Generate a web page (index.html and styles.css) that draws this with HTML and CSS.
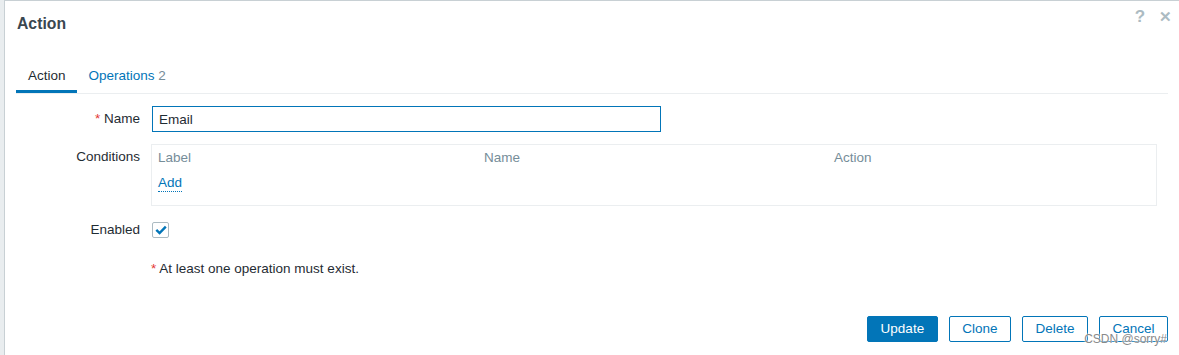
FILE: index.html
```html
<!DOCTYPE html>
<html>
<head>
<meta charset="utf-8">
<link rel="stylesheet" href="styles.css">
</head>
<body>
<div class="page">
  <div class="dialog">
    <div class="head">
      <h4 class="title">Action</h4>
      <div class="head-tools">
        <span class="tool">?</span>
        <span class="tool close">&#x2715;</span>
      </div>
    </div>
    <ul class="tabs">
      <li class="tab active">Action</li>
      <li class="tab">Operations <span class="count">2</span></li>
    </ul>
    <div class="form">
      <div class="row row-name">
        <label class="lbl"><span class="req">*</span> Name</label>
        <div class="field"><input class="text" type="text" value="Email"></div>
      </div>
      <div class="row row-cond">
        <label class="lbl lbl-top">Conditions</label>
        <div class="field">
          <div class="cond-box">
            <div class="cond-head">
              <span>Label</span><span>Name</span><span>Action</span>
            </div>
            <div class="cond-add"><a class="link">Add</a></div>
          </div>
        </div>
      </div>
      <div class="row row-enabled">
        <label class="lbl">Enabled</label>
        <div class="field">
          <span class="checkbox">
            <svg width="12" height="10" viewBox="0 0 12 10"><path d="M1.3 4.8 L4.6 8 L10.8 1.6" fill="none" stroke="#0275b8" stroke-width="2.4"/></svg>
          </span>
        </div>
      </div>
      <div class="row row-warn">
        <div class="lbl"></div>
        <div class="field warn"><span class="req">*</span> At least one operation must exist.</div>
      </div>
    </div>
    <div class="foot">
      <button class="btn primary">Update</button>
      <button class="btn">Clone</button>
      <button class="btn">Delete</button>
      <button class="btn">Cancel</button>
    </div>
    <div class="watermark">CSDN @sorry#</div>
  </div>
</div>
</body>
</html>
```
FILE: styles.css
```css
* { box-sizing: border-box; }
html, body { margin: 0; padding: 0; }
body {
  font-family: "Liberation Sans", Arial, sans-serif;
  font-size: 13.5px;
  color: #1f2c33;
  background: #e9edef;
  width: 1179px;
  height: 355px;
  overflow: hidden;
}
.page {
  height: 355px;
  padding-left: 4px;
  background: #e9edef;
}
.dialog {
  position: relative;
  height: 356px;
  background: #fff;
  border-left: 1px solid #c8d0d4;
  border-top: 1px solid #c8d0d4;
  padding: 0 11px 0 11px;
}
.head {
  display: flex;
  justify-content: space-between;
  align-items: flex-start;
  padding-top: 13px;
  height: 59px;
}
.title {
  margin: 0;
  font-size: 15.75px;
  line-height: 20px;
  font-weight: bold;
  color: #3a4750;
  padding-left: 1px;
}
.head-tools {
  display: flex;
  gap: 9px;
  margin-top: -7px;
  margin-right: -5px;
}
.tool {
  color: #acbbc2;
  font-size: 17px;
  font-weight: bold;
  line-height: 20px;
  width: 16px;
  text-align: center;
}
.close { font-size: 15px; }
.tabs {
  list-style: none;
  margin: 0;
  padding: 0;
  display: flex;
  border-bottom: 1px solid #ebeef0;
}
.tab {
  padding: 8px 11px 6px 12px;
  line-height: 16px;
  color: #0275b8;
  border-bottom: 3px solid transparent;
}
.tab.active {
  color: #1f2c33;
  border-bottom-color: #0275b8;
}
.count { color: #768d99; }
.form {
  padding-top: 12px;
}
.row {
  display: grid;
  grid-template-columns: 124px 1fr;
  column-gap: 12px;
}
.lbl {
  text-align: right;
  line-height: 16px;
}
.row-name { align-items: center; }
.req { color: #e33734; }
.text {
  display: block;
  width: 509px;
  height: 26px;
  border: 1px solid #0275b8;
  padding: 0 6px;
  font: inherit;
  color: #1f2c33;
  outline: none;
}
.row-cond { margin-top: 12px; }
.lbl-top { padding-top: 5px; }
.cond-box {
  margin-left: -1px;
  width: 1006px;
  height: 62px;
  border: 1px solid #ebeef0;
  padding: 5px 6px 0 6px;
}
.cond-head {
  display: grid;
  grid-template-columns: 326px 350px 1fr;
  color: #768d99;
  line-height: 16px;
}
.cond-add {
  margin-top: 9px;
  line-height: 16px;
}
.link {
  color: #0275b8;
  border-bottom: 1px dotted #0275b8;
  padding-bottom: 1px;
}
.row-enabled {
  margin-top: 16px;
  align-items: center;
}
.checkbox {
  display: flex;
  align-items: center;
  justify-content: center;
  width: 17px;
  height: 16px;
  border: 1px solid #acbbc2;
  border-radius: 2px;
  background: #fff;
}
.row-warn {
  margin-top: 23px;
}
.warn {
  line-height: 16px;
  margin-left: -1px;
}
.foot {
  display: flex;
  justify-content: flex-end;
  gap: 11px;
  margin-top: 39px;
}
.btn {
  height: 26px;
  padding: 0 12.5px;
  font: inherit;
  background: #fff;
  color: #0275b8;
  border: 1px solid #0275b8;
  border-radius: 2px;
  line-height: 24px;
}
.btn.primary {
  background: #0275b8;
  color: #fff;
}
.watermark {
  position: absolute;
  right: 12px;
  bottom: 10px;
  font-size: 12px;
  color: #8a8a8a;
  text-shadow: 0 0 2px #fff, 0 0 2px #fff;
  line-height: 14px;
}
```
